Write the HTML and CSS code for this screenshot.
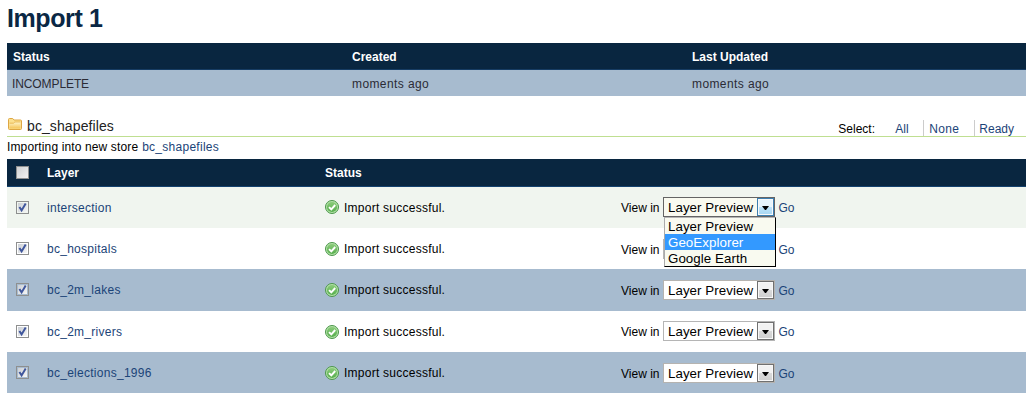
FILE: index.html
```html
<!DOCTYPE html>
<html lang="en">
<head>
<meta charset="utf-8">
<title>Import 1</title>
<link rel="stylesheet" href="styles.css">
</head>
<body>
<svg class="defs" aria-hidden="true">
  <defs>
    <linearGradient id="green" x1="0" y1="0" x2="0" y2="1"><stop offset="0" stop-color="#8ccc7c"/><stop offset="1" stop-color="#55ad4c"/></linearGradient>
    <linearGradient id="folder" x1="0" y1="0" x2="0" y2="1"><stop offset="0" stop-color="#fff6cc"/><stop offset="1" stop-color="#f4c458"/></linearGradient>
    <symbol id="ok" viewBox="0 0 14 14">
      <circle cx="7" cy="7" r="6.5" fill="#b4e2a8" stroke="#4a964a"/>
      <circle cx="7" cy="7" r="5.1" fill="url(#green)"/>
      <path d="M4 7.1 6.3 9.3 10.2 5" fill="none" stroke="#fff" stroke-width="1.9"/>
    </symbol>
    <symbol id="tick" viewBox="0 0 13 13">
      <path d="M3.4 6 5.6 9.4 9.7 2.6" fill="none" stroke="#3f569c" stroke-width="2"/>
    </symbol>
  </defs>
</svg>
<h1 class="title">Import 1</h1>
<div class="summary">
  <div class="summary-head"><span class="first">Status</span><span>Created</span><span>Last Updated</span></div>
  <div class="summary-row"><span class="state">INCOMPLETE</span><span>moments ago</span><span>moments ago</span></div>
</div>
<div class="store">
  <svg class="folder" viewBox="0 0 14 12"><path d="M.5 10.5v-9q0-1 1-1h3.2l1.3 1.5h6.5q1 0 1 1v7.5q0 1-1 1h-11q-1 0-1-1z" fill="#fbe08f" stroke="#dea744"/><path d="M1.5 5.2h4l1.4-1.2h5.6v6.5h-11z" fill="url(#folder)"/><path d="M1.5 5.2h4l1.4-1.2h5.6" fill="none" stroke="#e5ae48" stroke-width=".8"/></svg>
  <h2 class="store-name">bc_shapefiles</h2>
  <div class="select-links"><span class="label">Select:</span><a class="all">All</a><a class="none">None</a><a class="ready">Ready</a></div>
</div>
<p class="target">Importing into new store <a>bc_shapefiles</a></p>
<div class="layers">
  <div class="layers-head"><span class="check"></span><span>Layer</span><span>Status</span></div>
  <div class="layer hover">
    <span class="check"><svg><use href="#tick"/></svg></span><a class="name">intersection</a>
    <span class="result"><svg><use href="#ok"/></svg>Import successful.</span>
    <span class="view"><span>View in</span><span class="picker open">Layer Preview<i></i>
      <span class="menu"><span>Layer Preview</span><span class="active">GeoExplorer</span><span>Google Earth</span></span></span><a>Go</a></span>
  </div>
  <div class="layer low">
    <span class="check"><svg><use href="#tick"/></svg></span><a class="name">bc_hospitals</a>
    <span class="result"><svg><use href="#ok"/></svg>Import successful.</span>
    <span class="view"><span>View in</span><span class="picker"><i></i></span><a>Go</a></span>
  </div>
  <div class="layer shaded tall">
    <span class="check"><svg><use href="#tick"/></svg></span><a class="name">bc_2m_lakes</a>
    <span class="result"><svg><use href="#ok"/></svg>Import successful.</span>
    <span class="view"><span>View in</span><span class="picker">Layer Preview<i></i></span><a>Go</a></span>
  </div>
  <div class="layer">
    <span class="check"><svg><use href="#tick"/></svg></span><a class="name">bc_2m_rivers</a>
    <span class="result"><svg><use href="#ok"/></svg>Import successful.</span>
    <span class="view"><span>View in</span><span class="picker">Layer Preview<i></i></span><a>Go</a></span>
  </div>
  <div class="layer shaded low">
    <span class="check"><svg><use href="#tick"/></svg></span><a class="name">bc_elections_1996</a>
    <span class="result"><svg><use href="#ok"/></svg>Import successful.</span>
    <span class="view"><span>View in</span><span class="picker">Layer Preview<i></i></span><a>Go</a></span>
  </div>
</div>
</body>
</html>
```
FILE: styles.css
```css
* { box-sizing: border-box; }
body {
  margin: 0;
  padding: 4px 8px 0 7px;
  background: #fff;
  color: #000;
  font: 12px/16px "Liberation Sans", Arial, sans-serif;
}
a { color: #1b4478; text-decoration: none; letter-spacing: .27px; }
.defs { position: absolute; width: 0; height: 0; }
.title { margin: 0; height: 39px; font-size: 25px; line-height: 28px; letter-spacing: -.4px; color: #0a2744; }

.summary { height: 53px; }
.summary-head, .summary-row { display: grid; grid-template-columns: 340px 340px 1fr; padding: 1px 0 0 5px; align-items: center; }
.summary-head { height: 27px; padding-top: 2px; background: #092640; border-bottom: 1px solid #163c63; color: #fff; font-weight: bold; }
.summary-head .first { margin-left: 1px; }
.summary-row { height: 26px; padding-top: 2px; background: #a7bbcf; color: #2b2b35; letter-spacing: .4px; }
.summary-row .state { letter-spacing: -.1px; }

.store { display: flex; height: 41px; border-bottom: 1px solid #bfdf91; }
.folder { width: 14px; height: 12px; margin: 22px 0 0 1px; }
.store-name { margin: 20px 0 0 5px; font-size: 14px; line-height: 20px; font-weight: normal; letter-spacing: .1px; color: #222; }
.select-links { display: flex; margin: 24px 12px 0 auto; line-height: 18px; }
.select-links .label { width: 57px; }
.select-links a { height: 16px; letter-spacing: 0; }
.select-links .all { width: 28px; }
.select-links .none { width: 51px; padding-left: 5px; border-left: 1px solid #ccc; letter-spacing: .3px; }
.select-links .ready { padding-left: 4px; border-left: 1px solid #ccc; }
.target { margin: 0; height: 22px; padding-top: 2px; letter-spacing: .13px; }
.target a { margin-left: .5px; }

.layers-head, .layer { display: grid; grid-template-columns: 31px 278px 296px 1fr; padding-left: 9px; align-items: center; }
.layers-head { height: 28px; background: #092640; border-bottom: 1px solid #14426f; color: #fff; font-weight: bold; }
.layer { height: 41px; }
.tall { height: 42px; }
.low { padding-top: 1px; }
.hover { background: #f0f5ef; }
.shaded { background: #a7bbcf; }
.check {
  width: 13px;
  height: 13px;
  border: 1px solid #8e8f8f;
  background: linear-gradient(135deg, #cbcfd5, #f6f6f6) content-box #f4f4f4;
  padding: 1px;
}
.layer .check { margin-bottom: 1px; }
.layers-head .check { background: linear-gradient(135deg, #cfd0d2, #f2f2f2); }
.check svg { display: block; width: 13px; height: 13px; margin: -2px; }
.result { display: flex; align-items: center; gap: 5px; letter-spacing: .25px; }
.result svg { width: 14px; height: 14px; }
.hover .result svg { margin-bottom: 2px; }
.view { display: flex; align-items: center; }
.view > a { margin-left: 3px; letter-spacing: 0; }
.low .view > :not(.picker), .tall .view > :not(.picker) { padding-top: 2px; }
.picker {
  position: relative;
  width: 112px;
  height: 20px;
  margin-left: 4px;
  padding-left: 3.5px;
  border: 1px solid #b5b5b5;
  background: #fff;
  font-size: 13.33px;
  line-height: 20px;
  letter-spacing: .05px;
}
.layer:not(.low):not(.tall) .picker { margin-bottom: 2px; }
.shaded .picker { border-color: #b5b3b0; }
.picker i {
  position: absolute;
  top: 0;
  right: 0;
  width: 17px;
  height: 18px;
  border: 1px solid #707070;
  background: linear-gradient(#f2f2f2 50%, #dadada 50%, #cfcfcf);
  box-shadow: inset 0 0 0 1px #f8f8f8;
}
.picker i::after {
  content: "";
  position: absolute;
  top: 7px;
  left: 4px;
  border: solid transparent;
  border-width: 4px 3.5px 0;
  border-top-color: #000;
  width: 0;
  height: 0;
  box-sizing: content-box;
  padding-left: 1px;
}
.open { background: #f9faf0; border-color: #646464; }
.open i { border-color: #3c7fb1; background: linear-gradient(#e6f4fc 50%, #bfe3f8 50%, #a5d6f2); }
.menu {
  position: absolute;
  z-index: 2;
  top: 19px;
  left: 0;
  width: 112px;
  height: 50px;
  border: 1px solid #000;
  border-left-color: #aaa;
  border-top-color: #b5b5b5;
  background: #f9faf0;
  line-height: 18px;
}
.menu span { display: block; height: 16px; padding-left: 2.5px; }
.menu .active { background: #3399ff; color: #fff; }
```
